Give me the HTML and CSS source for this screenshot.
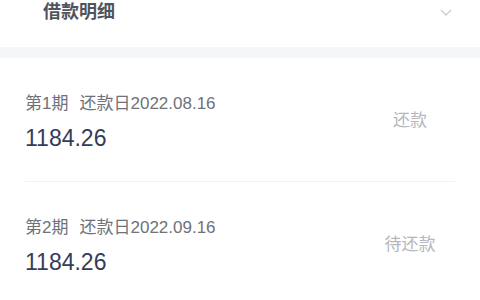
FILE: index.html
```html
<!DOCTYPE html>
<html lang="zh-CN">
<head>
<meta charset="utf-8">
<title>借款明细</title>
<link rel="stylesheet" href="styles.css">
</head>
<body>
<header class="head">
  <h1 class="title">借款明细</h1>
  <svg class="chev" width="12" height="7" viewBox="0 0 12 7"><path d="M1 1 L6 6 L11 1" fill="none" stroke="#c9ccd3" stroke-width="1.3"/></svg>
</header>
<div class="band"></div>
<ul class="list">
  <li class="row">
    <div class="info">
      <div class="label"><span class="term">第1期</span>还款日2022.08.16</div>
      <div class="amount">1184.26</div>
    </div>
    <div class="status">还款</div>
  </li>
  <li class="row">
    <div class="info">
      <div class="label"><span class="term">第2期</span>还款日2022.09.16</div>
      <div class="amount">1184.26</div>
    </div>
    <div class="status">待还款</div>
  </li>
</ul>
</body>
</html>
```

FILE: styles.css
```css
* { box-sizing: border-box; }
html, body {
  margin: 0;
  padding: 0;
  background: #ffffff;
  font-family: "Liberation Sans", "Noto Sans CJK SC", sans-serif;
}
.head {
  height: 47px;
  display: flex;
  justify-content: space-between;
  align-items: flex-start;
  padding: 0 28px 0 43px;
}
.title {
  margin: 0;
  font-size: 18px;
  line-height: 24px;
  font-weight: bold;
  color: #50545d;
}
.chev {
  margin-top: 9px;
  display: block;
}
.band {
  height: 11px;
  background: #f5f6f8;
}
.list {
  list-style: none;
  margin: 0;
  padding: 0 25px;
}
.row {
  display: flex;
  justify-content: space-between;
  align-items: center;
  padding: 36px 0 28px;
  border-bottom: 1px solid #f0f1f4;
}
.label {
  font-size: 17px;
  line-height: 20px;
  color: #6e727b;
  margin-bottom: 9px;
}
.term {
  margin-right: 11px;
}
.amount {
  font-size: 23px;
  line-height: 30px;
  color: #353c5a;
}
.status {
  width: 80px;
  margin-right: 5px;
  margin-bottom: 6px;
  text-align: center;
  font-size: 17px;
  line-height: 22px;
  color: #b4b7be;
}
```
